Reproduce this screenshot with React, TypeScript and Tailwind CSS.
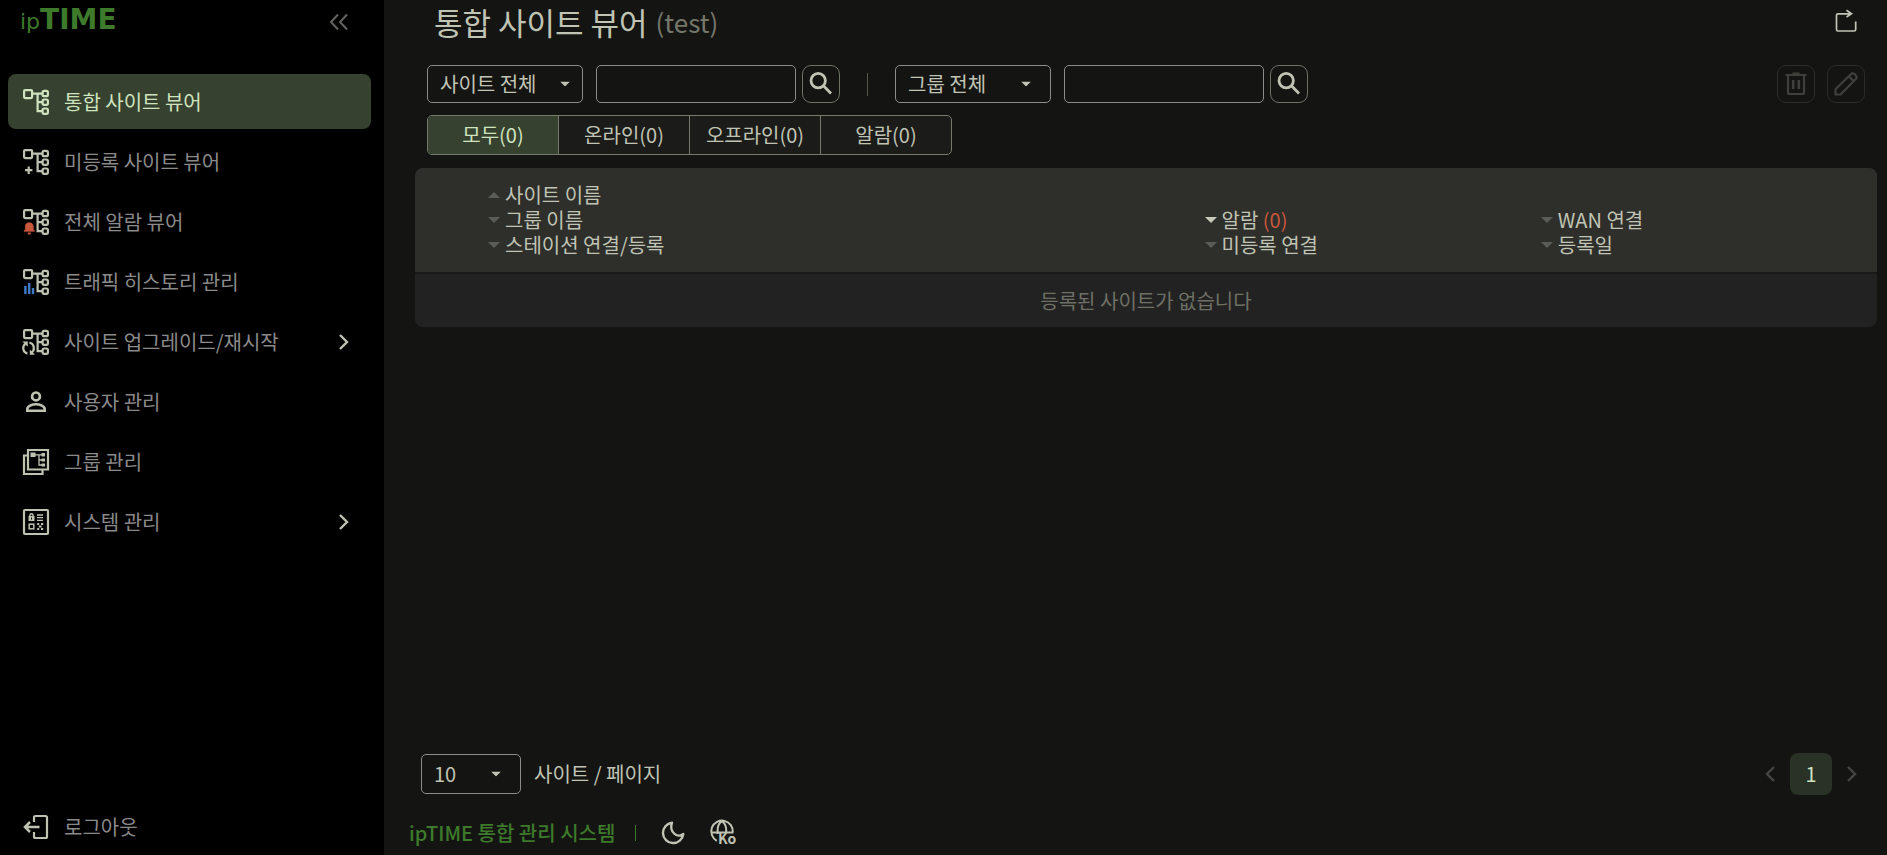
import type { ReactNode } from "react";

type IconProps = { children?: ReactNode };

function Frame({ children }: IconProps) {
  return (
    <svg viewBox="0 0 26 26" className="size-[26px] shrink-0 overflow-visible" fill="none" stroke="currentColor" strokeWidth="2.2" aria-hidden="true">
      {children}
    </svg>
  );
}

function Tree({ children }: IconProps) {
  return (
    <Frame>
      <rect x="1.1" y="1.1" width="8" height="8" rx="1" />
      <path d="M9 4.6H19M14.6 4.6V22.2H19M14.6 13.2H19" />
      <rect x="19.6" y="1.9" width="5.3" height="5.3" rx="1.5" />
      <rect x="19.6" y="10.5" width="5.3" height="5.3" rx="1.5" />
      <rect x="19.6" y="19.5" width="5.3" height="5.3" rx="1.5" />
      {children}
    </Frame>
  );
}

const items: { label: string; icon: ReactNode; more?: boolean }[] = [
  { label: "통합 사이트 뷰어", icon: <Tree /> },
  { label: "미등록 사이트 뷰어", icon: <Tree><path d="M2 21.2H9.4M5.7 17.5V25" /></Tree> },
  {
    label: "전체 알람 뷰어",
    icon: (
      <Tree>
        <path d="M1 22.2H11.6L10.2 20.4V17.5C10.2 15 8.6 13.8 6.3 13.8S2.4 15 2.4 17.5V20.4Z" fill="#c8573c" stroke="#c8573c" strokeWidth="0.8" />
        <path d="M4.6 23.4H8C8 26.4 4.6 26.4 4.6 23.4Z" fill="#c8573c" stroke="none" />
      </Tree>
    ),
  },
  { label: "트래픽 히스토리 관리", icon: <Tree><path d="M2.4 17V25M6.2 14V25M10 19V25" stroke="#3f7cc8" strokeWidth="2.4" /></Tree> },
  {
    label: "사이트 업그레이드/재시작",
    more: true,
    icon: (
      <Tree>
        <path d="M2.6 14.6A5.6 5.6 0 0 0 4.4 24.6M6.4 13.5A5.6 5.6 0 0 1 8.4 23.6" />
        <path d="M-.6 12.6H4.8V17.8ZM12 25.8H6.8V20.6Z" fill="currentColor" stroke="none" />
      </Tree>
    ),
  },
  {
    label: "사용자 관리",
    icon: (
      <Frame>
        <circle cx="13" cy="7.4" r="3.9" strokeWidth="2.7" />
        <path d="M4.3 21.7V20C4.3 17.2 9 15.2 13 15.2S21.7 17.2 21.7 20V21.7Z" strokeWidth="2.6" />
      </Frame>
    ),
  },
  {
    label: "그룹 관리",
    icon: (
      <Frame>
        <path d="M5 1H25V20.5H5Z" />
        <path d="M5 6.5H1V25H19.5V21" />
        <path d="M7.5 3.5H12.5V8H7.5ZM18.5 4H22V7.5H18.5ZM18.5 9.5H22V12.5H18.5ZM18.5 14.5H22V17.5H18.5Z" fill="currentColor" stroke="none" />
        <path d="M12 5.8H19M16 5.8V16H19M16 11H19" strokeWidth="1.3" />
      </Frame>
    ),
  },
  {
    label: "시스템 관리",
    more: true,
    icon: (
      <Frame>
        <rect x="1" y="1" width="24" height="24" rx="1" />
        <path d="M5.5 7H11.5V12H5.5Z" fill="currentColor" stroke="none" />
        <path d="M7 7.5V6C7 4.4 10 4.4 10 6V7.5" strokeWidth="1.4" />
        <path d="M8.5 8.5V10.5" stroke="#000" strokeWidth="1" />
        <path d="M14 6H20M14 8.7H20M14 11.4H20" strokeWidth="1.3" />
        <rect x="6.2" y="15.2" width="4.6" height="4.6" strokeWidth="1.5" />
        <path d="M14.2 15H16.2M18 15H20.2M14.2 20H16.2M18 20H20.2M15.8 17.5H18.6" strokeWidth="2" />
      </Frame>
    ),
  },
];

function Sort({ up, on, children }: { up?: boolean; on?: boolean; children: ReactNode }) {
  return (
    <button type="button" className="flex h-[25px] items-center gap-[5px] whitespace-nowrap leading-[25px]">
      <svg viewBox="0 0 12 6" className={`h-1.5 w-3 ${on ? "text-[#c6c9b8]" : "text-[#5a5c56]"}`} aria-hidden="true">
        <path d={up ? "M0 6L6 0L12 6Z" : "M0 0L6 6L12 0Z"} fill="currentColor" />
      </svg>
      <span>{children}</span>
    </button>
  );
}

function Select({ label, value, box, arrow }: { label: string; value: string; box: string; arrow: string }) {
  return (
    <div className={`relative ${box}`}>
      <select aria-label={label} className="size-full appearance-none rounded-[5px] border border-[#8c8d86] bg-transparent pl-3 leading-7">
        <option>{value}</option>
      </select>
      <svg viewBox="0 0 10 5" className={`pointer-events-none absolute top-1/2 h-[5px] w-2.5 -translate-y-1/2 ${arrow}`} aria-hidden="true">
        <path d="M0 0H10L5 5Z" fill="currentColor" />
      </svg>
    </div>
  );
}

function SearchField({ label }: { label: string }) {
  return (
    <div className="ml-[13px] flex items-center gap-1.5">
      <input type="text" aria-label={label} className="h-[38px] w-[200px] rounded-[5px] border border-[#8c8d86] bg-transparent px-3 outline-none" />
      <button type="button" aria-label={`${label} 검색`} className="grid size-[38px] place-items-center rounded-[9px] border border-[#6c7366]">
        <svg viewBox="0 0 24 24" className="size-6" fill="none" stroke="currentColor" strokeWidth="2.8" aria-hidden="true">
          <circle cx="9.2" cy="8.6" r="7.2" />
          <path d="M14.2 13.6L22 21.4" />
        </svg>
      </button>
    </div>
  );
}

function Chevron({ left }: { left?: boolean }) {
  return (
    <svg viewBox="0 0 10 16" className="h-4 w-2.5" fill="none" stroke="currentColor" strokeWidth="2.4" aria-hidden="true">
      <path d={left ? "M9 1L2 8L9 15" : "M1 1L8 8L1 15"} />
    </svg>
  );
}

const tabs = ["모두(0)", "온라인(0)", "오프라인(0)", "알람(0)"];

export default function App() {
  return (
    <div className="flex min-h-screen bg-[#141412] font-['Noto_Sans_CJK_KR','Noto_Sans',sans-serif] text-xl text-[#c0c4b4]">
      <aside className="flex w-96 shrink-0 flex-col bg-black pb-3.5">
        <div className="flex h-[74px] items-start justify-between pr-[35px] pl-5">
          <a href="#home" className="flex items-baseline font-['DejaVu_Sans'] leading-10 text-[#3d7a2b]">
            <span className="text-[22px]">ip</span>
            <span className="text-[28px] font-bold">TIME</span>
          </a>
          <button type="button" aria-label="메뉴 접기" className="mt-[13px] text-[#62635e]">
            <svg viewBox="0 0 20 18" className="h-[18px] w-5" fill="none" stroke="currentColor" strokeWidth="2" aria-hidden="true">
              <path d="M9 1.5L2 9L9 16.5M18 1.5L11 9L18 16.5" />
            </svg>
          </button>
        </div>
        <nav className="flex flex-col gap-[5px] pr-[13px] pl-2">
          {items.map((item, i) => (
            <a
              key={item.label}
              href="#menu"
              aria-current={i === 0 ? "page" : undefined}
              className={`flex h-[55px] items-center gap-[15px] rounded-lg pr-[22px] pl-[15px] ${i === 0 ? "bg-[#36422f] text-[#cfe3bf]" : "text-[#bec3b1]"}`}
            >
              {item.icon}
              <span className={`grow ${i === 0 ? "" : "text-[#8a8a8a]"}`}>{item.label}</span>
              {item.more && <Chevron />}
            </a>
          ))}
        </nav>
        <a href="#logout" className="mt-auto flex items-center gap-[15px] pl-[23px] text-[#bec3b1]">
          <Frame>
            <path d="M11 8V3.5Q11 2 12.5 2H22.5Q24 2 24 3.5V22.5Q24 24 22.5 24H12.5Q11 24 11 22.5V18" />
            <path d="M16.5 13H2M7 8L2 13L7 18" strokeWidth="2.5" />
          </Frame>
          <span className="text-[#8a8a8a]">로그아웃</span>
        </a>
      </aside>

      <main className="flex grow flex-col pb-2">
        <header className="flex h-[65px] items-start justify-between pr-[29px] pl-[50px]">
          <h1 className="flex items-center gap-2 text-[31px] leading-[44px]">
            통합 사이트 뷰어 <span className="text-[26px] text-[#74776a]">(test)</span>
          </h1>
          <button type="button" aria-label="새로고침" className="mt-[9px]">
            <svg viewBox="0 0 24 24" className="size-6" fill="none" stroke="currentColor" strokeWidth="1.7" aria-hidden="true">
              <path d="M17.5 4.8H4Q2.5 4.8 2.5 6.3V20.5Q2.5 22 4 22H20Q21.7 22 21.7 20.5V12.5M12.5 1.2L17.5 4.8L12.5 8" />
            </svg>
          </button>
        </header>

        <div className="flex items-center pr-[22px] pl-[43px]">
          <Select label="사이트" value="사이트 전체" box="h-[38px] w-[156px]" arrow="right-[13px]" />
          <SearchField label="사이트 이름" />
          <div className="mx-[27px] h-[23px] w-px bg-[#55584c]" />
          <Select label="그룹" value="그룹 전체" box="h-[38px] w-[156px]" arrow="right-5" />
          <SearchField label="그룹 이름" />
          <div className="ml-auto flex gap-3 text-[#3f403b]">
            <button type="button" aria-label="삭제" className="grid size-[38px] place-items-center rounded-[9px] border border-[#2b2c28]">
              <svg viewBox="0 0 24 24" className="size-6" fill="none" stroke="currentColor" strokeWidth="2.2" aria-hidden="true">
                <path d="M1.5 3H22.5M8.5 1.5H15.5M4 3V20.5Q4 22 5.5 22H18.5Q20 22 20 20.5V3" />
                <path d="M9.2 8V17M14.8 8V17" strokeWidth="2.6" />
              </svg>
            </button>
            <button type="button" aria-label="편집" className="grid size-[38px] place-items-center rounded-[9px] border border-[#2b2c28]">
              <svg viewBox="0 0 24 24" className="size-6" fill="none" stroke="currentColor" strokeWidth="2.2" aria-hidden="true">
                <path d="M1.5 22.5V17.2L17 2.2Q18.8 .8 20.6 2.2L21.8 3.4Q23.4 5.2 21.8 7L6.6 22.5ZM15 4.4L19.6 9" />
              </svg>
            </button>
          </div>
        </div>

        <div className="mt-3 ml-[43px] flex h-10 w-[525px] overflow-hidden rounded-[5px] border border-[#74796c] bg-[#1b1b19]">
          {tabs.map((tab, i) => (
            <button key={tab} type="button" aria-pressed={i === 0} className={`flex-1 ${i === 0 ? "bg-[#36422f] text-[#cfe3bf]" : "border-l border-[#74796c]"}`}>
              {tab}
            </button>
          ))}
        </div>

        <div className="mt-[13px] mr-2.5 ml-[31px] overflow-hidden rounded-lg bg-[#222222]">
          <table className="w-full table-fixed border-collapse text-left">
            <colgroup>
              <col className="w-[73px]" />
              <col />
              <col className="w-[23%]" />
              <col className="w-[23%]" />
            </colgroup>
            <thead className="bg-[#2e2f2b]">
              <tr className="h-[105px] border-b-2 border-[#191a18] align-bottom">
                <td />
                <th className="p-0 pb-[15px] font-normal">
                  <Sort up>사이트 이름</Sort>
                  <Sort>그룹 이름</Sort>
                  <Sort>스테이션 연결/등록</Sort>
                </th>
                <th className="p-0 pb-[15px] font-normal">
                  <Sort on>알람 <span className="text-[#c8573c]">(0)</span></Sort>
                  <Sort>미등록 연결</Sort>
                </th>
                <th className="p-0 pb-[15px] font-normal">
                  <Sort>WAN 연결</Sort>
                  <Sort>등록일</Sort>
                </th>
              </tr>
            </thead>
            <tbody>
              <tr>
                <td colSpan={4} className="h-[54px] text-center text-[#6e7066]">등록된 사이트가 없습니다</td>
              </tr>
            </tbody>
          </table>
        </div>

        <div className="mt-auto flex items-center justify-between pr-[30px] pl-[37px]">
          <div className="flex items-center gap-[13px]">
            <Select label="페이지당 사이트 수" value="10" box="h-10 w-[100px]" arrow="right-5" />
            <span>사이트 / 페이지</span>
          </div>
          <div className="flex items-center gap-[15px] text-[#454641]">
            <button type="button" aria-label="이전 페이지"><Chevron left /></button>
            <button type="button" aria-current="page" className="size-[42px] rounded-lg bg-[#2a3126] text-[#cfe3bf]">1</button>
            <button type="button" aria-label="다음 페이지"><Chevron /></button>
          </div>
        </div>

        <footer className="mt-6 flex items-center pl-[25px]">
          <span className="font-medium text-[#3d7a2b]">ipTIME 통합 관리 시스템</span>
          <div className="ml-5 h-4 w-px bg-[#3d7a2b]" />
          <button type="button" aria-label="다크 모드" className="ml-[25px]">
            <svg viewBox="0 0 24 24" className="size-6" fill="none" stroke="currentColor" strokeWidth="2.4" strokeLinejoin="round" aria-hidden="true">
              <path d="M11 1.7A10.2 10.2 0 1 0 22.3 13C17.5 17.5 7.5 12 11 1.7Z" />
            </svg>
          </button>
          <button type="button" aria-label="언어" className="ml-[25px]">
            <svg viewBox="0 0 26 26" className="size-[26px] overflow-visible" fill="none" stroke="currentColor" strokeWidth="2" aria-hidden="true">
              <path d="M6.8 20.8A10.8 10.8 0 1 1 22.8 12.4M1 12.4H23.4M7.6 14V10.5C7.6 6 9 3 11.9 1.2C14.8 3 16.2 6 16.2 10.5V13" />
              <text x="8" y="24" fill="currentColor" stroke="none" fontSize="14" fontWeight="700">Ko</text>
            </svg>
          </button>
        </footer>
      </main>
    </div>
  );
}
